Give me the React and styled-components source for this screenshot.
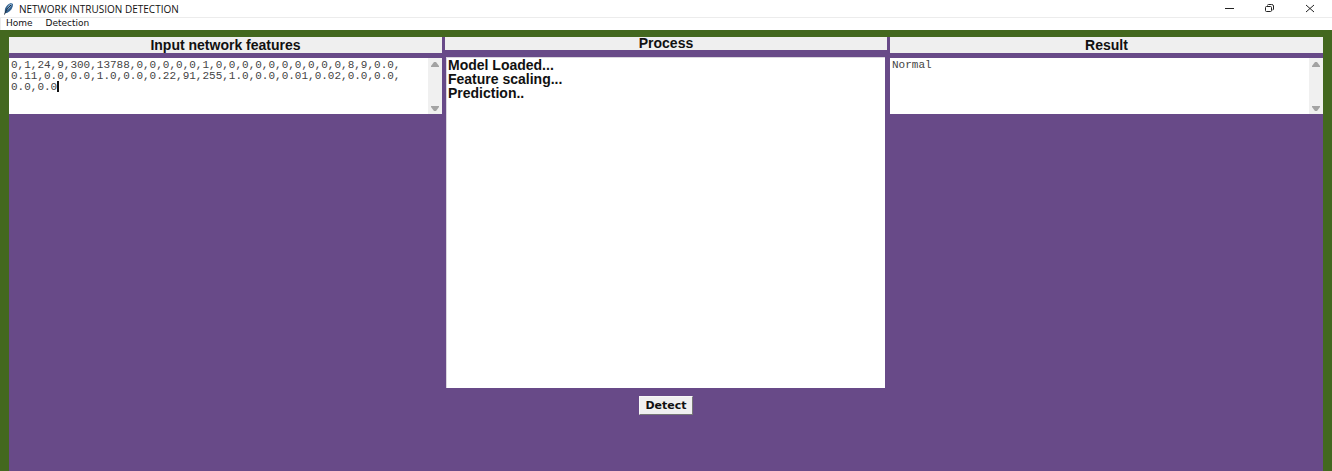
import React, { useState } from "react";
import styled, { createGlobalStyle } from "styled-components";

const GlobalStyle = createGlobalStyle`
  *, *::before, *::after { box-sizing: border-box; }
  html, body, #root { height: 100%; }
  body { margin: 0; background: #43681f; overflow: hidden; }
`;

const heading = '"Liberation Sans", Arial, sans-serif';
const mono = '"Liberation Mono", "Courier New", monospace';
const ui = '"Open Sans", "Segoe UI", sans-serif';

const Window = styled.div`
  min-height: 100vh;
  display: flex;
  flex-direction: column;
  color: #111;
  font-family: ${ui};
`;

const TitleBar = styled.header`
  display: flex;
  align-items: center;
  height: 17px;
  padding: 0 2px 0 3px;
  background: #fff;
`;

const AppTitle = styled.h1`
  flex: 1;
  margin: 0 0 0 5px;
  font-size: 10px;
  line-height: 16px;
  font-weight: 400;
`;

const WindowButton = styled.button`
  display: flex;
  align-items: center;
  justify-content: center;
  width: 40px;
  height: 17px;
  padding: 0;
  border: 0;
  background: none;
  color: #222;
`;

const MenuBar = styled.nav`
  display: flex;
  align-items: flex-start;
  gap: 13px;
  height: 13px;
  padding: 0 5px;
  background: #fff;
  border-top: 1px solid #ececec;
  border-left: 1px solid #ececec;
`;

const MenuItem = styled.button`
  padding: 0;
  border: 0;
  background: none;
  color: #111;
  font: 9px/11px "DejaVu Sans", sans-serif;
`;

const Frame = styled.div`
  flex: 1;
  display: flex;
  padding: 7px 9px 0;
  background: #43681f;
`;

const Workspace = styled.main`
  flex: 1;
  display: grid;
  grid-template-columns: 433fr 442fr 433fr;
  gap: 3px;
  align-items: start;
  background: #684a88;
`;

const Column = styled.section`
  display: flex;
  flex-direction: column;
  gap: ${(p) => (p.$center ? 7 : 5)}px;
  min-width: 0;
`;

const ColumnHeading = styled.h2`
  height: ${(p) => (p.$compact ? 13 : 16)}px;
  margin: 0;
  background: #efefef;
  color: #111;
  text-align: center;
  font: bold 14px/${(p) => (p.$compact ? 13 : 16)}px ${heading};
`;

const TextPanel = styled.div`
  position: relative;
  display: flex;
  height: 56px;
  background: #fff;
`;

const TextArea = styled.textarea`
  flex: 1;
  min-width: 0;
  padding: 2px 1px 1px 2px;
  border: 0;
  outline: 0;
  resize: none;
  overflow: hidden;
  white-space: pre;
  background: #fff;
  color: #444;
  font: 11px/11px ${mono};
`;

const Caret = styled.span`
  position: absolute;
  top: 23px;
  left: calc(2px + 7ch);
  width: 2px;
  height: 11px;
  background: #111;
  font: 11px/11px ${mono};
`;

const ScrollTrack = styled.div`
  display: flex;
  flex-direction: column;
  justify-content: space-between;
  width: 14px;
  background: #f0f0f0;
`;

const ScrollButton = styled.button`
  display: flex;
  justify-content: center;
  align-items: center;
  height: 12px;
  padding: 0;
  border: 0;
  background: none;
  color: #a3a3a3;
`;

const Log = styled.ul`
  height: 331px;
  margin: 0 2px 0 1px;
  padding: 0 0 0 1px;
  list-style: none;
  background: #fff;
  border: solid #d9d5de;
  border-width: 1px 0 0 1px;
  color: #111;
  font: bold 14px/14px ${heading};
`;

const DetectButton = styled.button`
  align-self: center;
  height: 19px;
  margin-top: 1px;
  padding: 0 5px;
  border: 1px solid #f8f8f8;
  border-right-color: #777;
  border-bottom-color: #777;
  background: #f0f0f0;
  color: #111;
  font: bold 11px/17px "DejaVu Sans", sans-serif;
`;

function FeatherIcon() {
  return (
    <svg width="11" height="13" viewBox="0 0 11 13" aria-hidden="true">
      <path d="M2 11C1 7 3 3 8 1l2 1c0 4-2 7-6 9z" fill="#315f8c" />
      <path d="M4 8C4 5 6 2 8.500 1.500L9 2C8.500 4 6 7 4 8z" fill="#8db3d4" />
      <path d="M1.500 12.500C2.500 9 4.500 6 8 3" stroke="#1c2b3c" fill="none" />
    </svg>
  );
}

function Scrollbar({ name }) {
  return (
    <ScrollTrack>
      <ScrollButton aria-label={`Scroll ${name} up`}>
        <svg width="8" height="5" viewBox="0 0 8 5">
          <path d="M0 5V4L3 0h2l3 4v1z" fill="currentColor" />
        </svg>
      </ScrollButton>
      <ScrollButton aria-label={`Scroll ${name} down`}>
        <svg width="8" height="5" viewBox="0 0 8 5">
          <path d="M0 0v1l3 4h2l3-4V0z" fill="currentColor" />
        </svg>
      </ScrollButton>
    </ScrollTrack>
  );
}

const initialFeatures = [
  "0,1,24,9,300,13788,0,0,0,0,0,1,0,0,0,0,0,0,0,0,0,0,8,9,0.0,",
  "0.11,0.0,0.0,1.0,0.0,0.22,91,255,1.0,0.0,0.01,0.02,0.0,0.0,",
  "0.0,0.0",
].join("\n");

const steps = ["Model Loaded...", "Feature scaling...", "Prediction.."];

export default function App() {
  const [features, setFeatures] = useState(initialFeatures);

  return (
    <Window>
      <GlobalStyle />
      <TitleBar>
        <FeatherIcon />
        <AppTitle>NETWORK INTRUSION DETECTION</AppTitle>
        <WindowButton aria-label="Minimize">
          <svg width="10" height="9" viewBox="0 0 10 9">
            <path d="M0 4.500h9" stroke="currentColor" />
          </svg>
        </WindowButton>
        <WindowButton aria-label="Restore">
          <svg width="10" height="9" viewBox="0 0 10 9" fill="none" stroke="currentColor">
            <rect x=".5" y="2.500" width="6" height="5" rx="1" />
            <path d="M2.500 1.500Q2.500 .5 3.500 .5h3Q8.500 .5 8.500 2v3Q8.500 6 7.500 6" />
          </svg>
        </WindowButton>
        <WindowButton aria-label="Close">
          <svg width="10" height="9" viewBox="0 0 10 9">
            <path d="M1 1l8 7M9 1L1 8" stroke="currentColor" />
          </svg>
        </WindowButton>
      </TitleBar>
      <MenuBar>
        <MenuItem>Home</MenuItem>
        <MenuItem>Detection</MenuItem>
      </MenuBar>
      <Frame>
        <Workspace>
          <Column>
            <ColumnHeading>
              <label htmlFor="features">Input network features</label>
            </ColumnHeading>
            <TextPanel>
              <TextArea
                id="features"
                spellCheck={false}
                value={features}
                onChange={(e) => setFeatures(e.target.value)}
              />
              <Caret />
              <Scrollbar name="features" />
            </TextPanel>
          </Column>
          <Column $center>
            <ColumnHeading $compact>Process</ColumnHeading>
            <Log>
              {steps.map((step) => (
                <li key={step}>{step}</li>
              ))}
            </Log>
            <DetectButton>Detect</DetectButton>
          </Column>
          <Column>
            <ColumnHeading>
              <label htmlFor="result">Result</label>
            </ColumnHeading>
            <TextPanel>
              <TextArea id="result" spellCheck={false} readOnly value="Normal" />
              <Scrollbar name="result" />
            </TextPanel>
          </Column>
        </Workspace>
      </Frame>
    </Window>
  );
}
